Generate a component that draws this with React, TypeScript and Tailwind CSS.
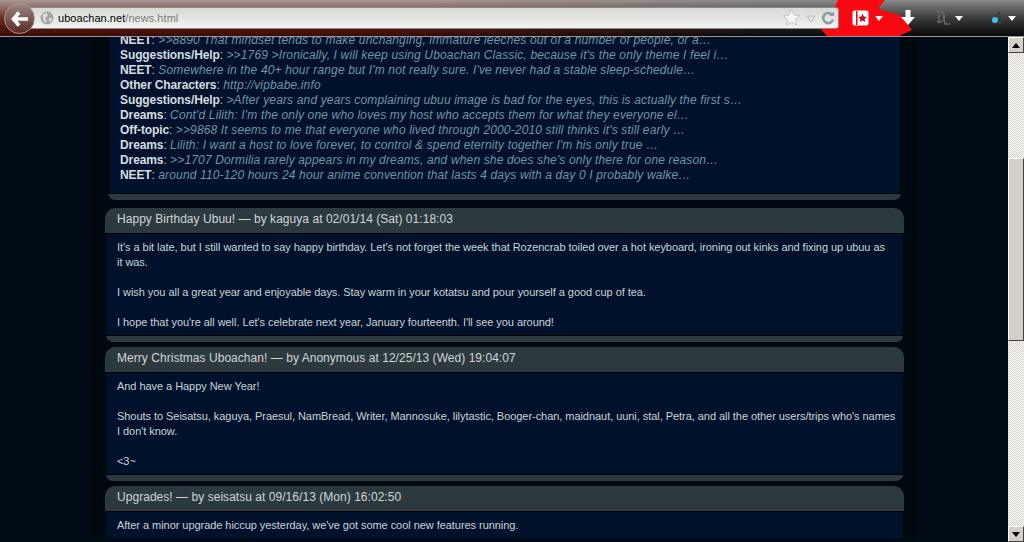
import React from 'react';

const shoutbox = [
  { board: 'NEET', text: ">>8890 That mindset tends to make unchanging, immature leeches out of a number of people, or a…" },
  { board: 'Suggestions/Help', text: ">>1769 >Ironically, I will keep using Uboachan Classic, because it's the only theme I feel i…" },
  { board: 'NEET', text: "Somewhere in the 40+ hour range but I'm not really sure. I've never had a stable sleep-schedule…" },
  { board: 'Other Characters', text: 'http://vipbabe.info' },
  { board: 'Suggestions/Help', text: '>After years and years complaining ubuu image is bad for the eyes, this is actually the first s…' },
  { board: 'Dreams', text: "Cont'd Lilith: I'm the only one who loves my host who accepts them for what they everyone el…" },
  { board: 'Off-topic', text: '>>9868 It seems to me that everyone who lived through 2000-2010 still thinks it\'s still early …' },
  { board: 'Dreams', text: "Lilith: I want a host to love forever, to control & spend eternity together I'm his only true …" },
  { board: 'Dreams', text: ">>1707 Dormilia rarely appears in my dreams, and when she does she's only there for one reason…" },
  { board: 'NEET', text: 'around 110-120 hours 24 hour anime convention that lasts 4 days with a day 0 I probably walke…' },
];

const Post: React.FC<{ title: string; children?: React.ReactNode; cut?: boolean }> = ({ title, children, cut }) => (
  <div className="mb-[5px]">
    <div className="h-[26px] rounded-t-[10px] bg-[#2c3a40] border-b border-black pl-3 text-[12px] leading-[23px] tracking-[0.04px] text-[#d0d4d4]">
      {title}
    </div>
    <div className="bg-[#00122b] mx-px border-x border-[#000a14] pl-[10px] pr-0 pt-[6px] pb-[5px] text-[11px] leading-[15px] tracking-[-0.05px] text-[#ccd2d8]">
      {children}
    </div>
    {!cut && <div className="h-[7px] mx-[1px] rounded-b-[10px] bg-[#2c3a40] border-t border-black" />}
  </div>
);

const App: React.FC = () => {
  return (
    <div className="w-[1024px] h-[542px] overflow-hidden flex flex-col bg-black font-['Liberation_Sans',Arial,sans-serif]">
      {/* browser bar */}
      <div className="relative h-[37px] shrink-0 border-b border-[#9a9a9a] bg-gradient-to-b from-[#8a8a8a] via-[#3c3c3c] to-[#0a0a0a] overflow-hidden">
        <div className="absolute left-0 top-0 w-[780px] h-[36px] bg-gradient-to-b from-[#a89894] via-[#6c2a22] to-[#3c0a04] [mask-image:linear-gradient(to_right,black_50%,transparent)]" />
        <svg className="absolute left-[810px] top-0" width="110" height="36" viewBox="0 0 110 36">
          <path d="M28 0 L75 0 L68 9 L90 15 L102 30 L93 34 L90 36 L17 36 L10 28 L22 14 Z" fill="#fa0a10" />
        </svg>
        <div className="relative flex items-center h-full">
          <div className="absolute left-[30px] top-[7px] w-[809px] h-[22px] rounded-r-[3px] border border-[#8a8a8a] bg-gradient-to-b from-[#d8d8d6] to-[#f2f2f0] flex items-center pl-[27px] text-[11px] tracking-[0.05px] text-[#7c7c7c]">
            <span className="text-black">uboachan.net</span>/news.html
          </div>
          <div className="absolute left-[4px] top-[3px] w-[31px] h-[31px] rounded-full border border-[#a89694] bg-gradient-to-b from-[#9a8884] to-[#5a2a26] flex items-center justify-center">
            <svg width="18" height="16" viewBox="0 0 18 16">
              <path d="M8 1.5 L2.5 8 L8 14.5 M3 8 H17" fill="none" stroke="#fff" strokeWidth="3.6" />
            </svg>
          </div>
          <svg className="absolute left-[40px] top-[11px]" width="14" height="14" viewBox="0 0 14 14">
            <circle cx="7" cy="7" r="6.5" fill="#a4a4a4" />
            <path d="M3 3 L7 2 L8 5 L5 7 L7 10 L5 12 L3 8 Z M9 7 L12 7 L11 11 L9 10 Z" fill="#dcdcdc" />
          </svg>
          <svg className="absolute left-[783px] top-[9px]" width="17" height="17" viewBox="0 0 17 17">
            <path d="M8.5 0.5 L11 6 L16.5 6.7 L12.5 10.5 L13.6 16 L8.5 13.3 L3.4 16 L4.5 10.5 L0.5 6.7 L6 6 Z" fill="#f6f6f4" stroke="#c4c4c4" />
          </svg>
          <svg className="absolute left-[806px] top-[15px]" width="10" height="8" viewBox="0 0 10 8">
            <path d="M1 1 H9 L5 7 Z" fill="#e8e8e8" stroke="#b8b8b8" />
          </svg>
          <svg className="absolute left-[821px] top-[11px]" width="14" height="14" viewBox="0 0 14 14">
            <path d="M11.5 4.5 A5 5 0 1 0 12 8.5" fill="none" stroke="#8e9ca4" strokeWidth="2.6" />
            <path d="M8 5 H13 V0.5 Z" fill="#8e9ca4" />
          </svg>
          <svg className="absolute left-[852px] top-[10px]" width="17" height="16" viewBox="0 0 17 16">
            <rect x="0.5" y="0.5" width="16" height="15" rx="2" fill="#fff" />
            <rect x="4" y="1" width="1.5" height="14" fill="#d01018" />
            <path d="M10.5 3.5 L11.8 6.6 L15 6.9 L12.6 9 L13.3 12 L10.5 10.4 L7.7 12 L8.4 9 L6 6.9 L9.2 6.6 Z" fill="#c4101a" />
          </svg>
          <svg className="absolute left-[875px] top-[16px]" width="8" height="5" viewBox="0 0 8 5"><path d="M0 0 H8 L4 5 Z" fill="#fff" /></svg>
          <svg className="absolute left-[900px] top-[10px]" width="16" height="16" viewBox="0 0 16 16">
            <path d="M5.5 0 H10.5 V7 H15 L8 15 L1 7 H5.5 Z" fill="#fff" />
          </svg>
          <svg className="absolute left-[935px] top-[10px]" width="16" height="16" viewBox="0 0 16 16">
            <path d="M2 2 H5 C11 2 11 12 5 12 H2 M5 5 C3 6 3 10 5 11 M8 2 L10 14 H15" fill="none" stroke="#6a6a6a" strokeWidth="1.4" />
          </svg>
          <svg className="absolute left-[955px] top-[16px]" width="8" height="5" viewBox="0 0 8 5"><path d="M0 0 H8 L4 5 Z" fill="#fff" /></svg>
          <svg className="absolute left-[990px] top-[11px]" width="14" height="14" viewBox="0 0 14 14">
            <circle cx="5" cy="9" r="3" fill="#3cc4f0" />
            <path d="M6 6 L10 1" stroke="#20384a" strokeWidth="1.5" />
            <circle cx="10" cy="12" r="1" fill="#1c5a78" />
          </svg>
          <svg className="absolute left-[1008px] top-[16px]" width="8" height="5" viewBox="0 0 8 5"><path d="M0 0 H8 L4 5 Z" fill="#fff" /></svg>
        </div>
      </div>

      {/* page + scrollbar */}
      <div className="flex flex-1 min-h-0">
        <div className="flex-1 bg-[#010b16] overflow-hidden">
          <div className="w-[822px] h-full ml-[93px] border-x border-black bg-[#000810] pl-[11px] pr-[10px] -mt-[4px]">
            {/* shoutbox */}
            <div className="mx-[3px] mb-[8px]">
              <div className="bg-[#00122b] border-x border-black pl-[11px] pb-[10px] text-[12px] leading-[15px]">
                {shoutbox.map((row, i) => (
                  <div key={i} className="whitespace-nowrap">
                    <b className="text-[#d8dce0] tracking-[-0.1px]">{row.board}</b>
                    <span className="text-[#c0c8d0]">: </span>
                    <i className="text-[#7094a8] tracking-[0.15px]">{row.text}</i>
                  </div>
                ))}
              </div>
              <div className="h-[7px] rounded-b-[10px] bg-[#2c3a40] border-t border-black" />
            </div>
            <Post title="Happy Birthday Ubuu! — by kaguya at 02/01/14 (Sat) 01:18:03">
              It's a bit late, but I still wanted to say happy birthday. Let's not forget the week that Rozencrab toiled over a hot keyboard, ironing out kinks and fixing up ubuu as
              <br />
              it was.
              <br /><br />
              I wish you all a great year and enjoyable days. Stay warm in your kotatsu and pour yourself a good cup of tea.
              <br /><br />
              I hope that you're all well. Let's celebrate next year, January fourteenth. I'll see you around!
            </Post>
            <Post title="Merry Christmas Uboachan! — by Anonymous at 12/25/13 (Wed) 19:04:07">
              And have a Happy New Year!
              <br /><br />
              Shouts to Seisatsu, kaguya, Praesul, NamBread, Writer, Mannosuke, lilytastic, Booger-chan, maidnaut, uuni, stal, Petra, and all the other users/trips who's names
              <br />
              I don't know.
              <br /><br />
              &lt;3~
            </Post>
            <Post cut title="Upgrades! — by seisatsu at 09/16/13 (Mon) 16:02:50">
              After a minor upgrade hiccup yesterday, we've got some cool new features running.
            </Post>
          </div>
        </div>
        {/* scrollbar */}
        <div className="w-[16px] shrink-0 flex flex-col bg-[repeating-conic-gradient(#d4d0c8_0_25%,#ffffff_0_50%)] bg-[length:2px_2px]">
          <div className="h-[16px] bg-[#d4d0c8] border border-t-white border-l-white border-r-[#404040] border-b-[#404040] flex items-center justify-center">
            <svg width="8" height="5" viewBox="0 0 8 5"><path d="M4 0 L8 5 H0 Z" fill="#000" /></svg>
          </div>
          <div className="h-[105px]" />
          <div className="h-[183px] bg-[#d4d0c8] border border-t-white border-l-white border-r-[#404040] border-b-[#404040]" />
          <div className="flex-1" />
          <div className="h-[16px] bg-[#d4d0c8] border border-t-white border-l-white border-r-[#404040] border-b-[#404040] flex items-center justify-center">
            <svg width="8" height="5" viewBox="0 0 8 5"><path d="M0 0 H8 L4 5 Z" fill="#000" /></svg>
          </div>
        </div>
      </div>
    </div>
  );
};

export default App;
